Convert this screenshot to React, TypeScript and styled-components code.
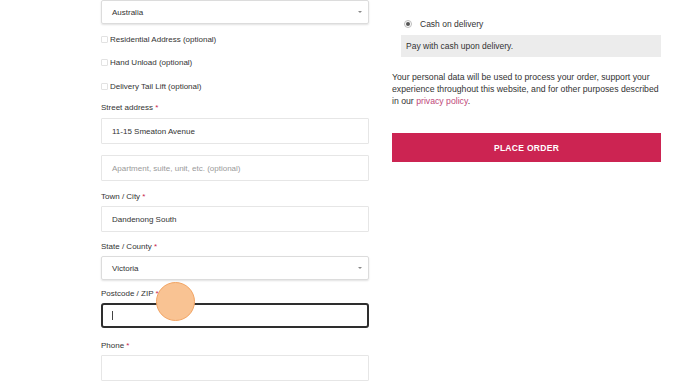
import React from 'react';
import styled, { createGlobalStyle } from 'styled-components';

const GlobalStyle = createGlobalStyle`
  html, body {
    margin: 0;
    padding: 0;
    background: #fff;
    overflow: hidden;
  }
  body {
    font-family: 'Liberation Sans', Arial, sans-serif;
    color: #333;
  }
`;

const Page = styled.div`
  display: flex;
  align-items: flex-start;
  gap: 23px;
  width: 688px;
  height: 384px;
  padding-left: 101px;
  box-sizing: border-box;
  overflow: hidden;
`;

const Billing = styled.div`
  width: 268px;
  display: flex;
  flex-direction: column;
`;

const Select = styled.div<{ $top?: number }>`
  position: relative;
  height: 24px;
  margin-top: ${(p) => p.$top ?? 0}px;
  border: 1px solid #dcdcdc;
  border-radius: 2px;
  box-shadow: 0 1px 2px rgba(0, 0, 0, 0.12);
  box-sizing: border-box;
  display: flex;
  align-items: center;
  padding-left: 10px;
  font-size: 8px;
  color: #333;
`;

const Caret = styled.span`
  position: absolute;
  right: 6px;
  top: 10px;
  width: 0;
  height: 0;
  border-left: 2px solid transparent;
  border-right: 2px solid transparent;
  border-top: 2px solid #888;
`;

const CheckRow = styled.label<{ $top: number }>`
  display: flex;
  align-items: center;
  gap: 2px;
  height: 10px;
  margin-top: ${(p) => p.$top}px;
  font-size: 8px;
  color: #333;
`;

const Box = styled.span`
  width: 7px;
  height: 7px;
  border: 1px solid #e2e2e2;
  border-radius: 1px;
  box-sizing: border-box;
`;

const Label = styled.div<{ $top: number }>`
  margin-top: ${(p) => p.$top}px;
  font-size: 8px;
  line-height: 10px;
  color: #333;
`;

const Req = styled.span`
  color: #c8254f;
`;

const Field = styled.div<{ $top: number; $focus?: boolean; $placeholder?: boolean }>`
  position: relative;
  height: ${(p) => (p.$focus ? 25 : 26)}px;
  margin-top: ${(p) => p.$top}px;
  border: ${(p) => (p.$focus ? '2px solid #2e2e2e' : '1px solid #e6e6e6')};
  border-radius: ${(p) => (p.$focus ? 3 : 1)}px;
  box-sizing: border-box;
  display: flex;
  align-items: center;
  padding-left: ${(p) => (p.$focus ? 9 : 10)}px;
  font-size: 8px;
  color: ${(p) => (p.$placeholder ? '#9a9a9a' : '#333')};
`;

const Cursor = styled.span`
  width: 1px;
  height: 9px;
  background: #444;
`;

const Touch = styled.span`
  position: absolute;
  left: 53px;
  top: -23px;
  width: 39px;
  height: 39px;
  border-radius: 50%;
  background: #f9c393;
  border: 1px solid #f2a463;
  box-sizing: border-box;
  pointer-events: none;
  z-index: 2;
`;

const Review = styled.div`
  width: 269px;
  display: flex;
  flex-direction: column;
  padding-top: 19px;
`;

const Method = styled.div`
  display: flex;
  align-items: center;
  gap: 8px;
  padding-left: 12px;
  height: 10px;
  font-size: 8.5px;
  color: #333;
`;

const Radio = styled.span`
  width: 8px;
  height: 8px;
  border-radius: 50%;
  border: 1px solid #bbb;
  box-sizing: border-box;
  display: flex;
  align-items: center;
  justify-content: center;
  &::after {
    content: '';
    width: 4px;
    height: 4px;
    border-radius: 50%;
    background: #555;
  }
`;

const MethodBox = styled.div`
  margin: 6px 0 0 9px;
  height: 22px;
  background: #ececec;
  display: flex;
  align-items: center;
  padding-left: 5px;
  font-size: 8.5px;
  color: #333;
`;

const Privacy = styled.p`
  margin: 14px 0 0;
  font-size: 8.7px;
  line-height: 12px;
  color: #333;
`;

const PolicyLink = styled.span`
  color: #c0487a;
`;

const PlaceOrder = styled.button`
  margin-top: 26px;
  height: 29px;
  width: 100%;
  border: none;
  background: #cc2452;
  color: #fff;
  font-family: 'Liberation Sans', Arial, sans-serif;
  font-weight: bold;
  font-size: 8.5px;
  letter-spacing: 0.3px;
`;

export default function App() {
  return (
    <>
      <GlobalStyle />
      <Page>
        <Billing>
          <Select>
            Australia
            <Caret />
          </Select>
          <CheckRow $top={10}>
            <Box />
            Residential Address (optional)
          </CheckRow>
          <CheckRow $top={13}>
            <Box />
            Hand Unload (optional)
          </CheckRow>
          <CheckRow $top={14}>
            <Box />
            Delivery Tail Lift (optional)
          </CheckRow>
          <Label $top={12}>
            Street address <Req>*</Req>
          </Label>
          <Field $top={5}>11-15 Smeaton Avenue</Field>
          <Field $top={11} $placeholder>
            Apartment, suite, unit, etc. (optional)
          </Field>
          <Label $top={11}>
            Town / City <Req>*</Req>
          </Label>
          <Field $top={4}>Dandenong South</Field>
          <Label $top={10}>
            State / County <Req>*</Req>
          </Label>
          <Select $top={4}>
            Victoria
            <Caret />
          </Select>
          <Label $top={9}>
            Postcode / ZIP <Req>*</Req>
          </Label>
          <Field $top={4} $focus>
            <Cursor />
            <Touch />
          </Field>
          <Label $top={13}>
            Phone <Req>*</Req>
          </Label>
          <Field $top={4} />
        </Billing>
        <Review>
          <Method>
            <Radio />
            Cash on delivery
          </Method>
          <MethodBox>Pay with cash upon delivery.</MethodBox>
          <Privacy>
            Your personal data will be used to process your order, support your experience throughout this website, and
            for other purposes described in our <PolicyLink>privacy policy</PolicyLink>.
          </Privacy>
          <PlaceOrder>PLACE ORDER</PlaceOrder>
        </Review>
      </Page>
    </>
  );
}
